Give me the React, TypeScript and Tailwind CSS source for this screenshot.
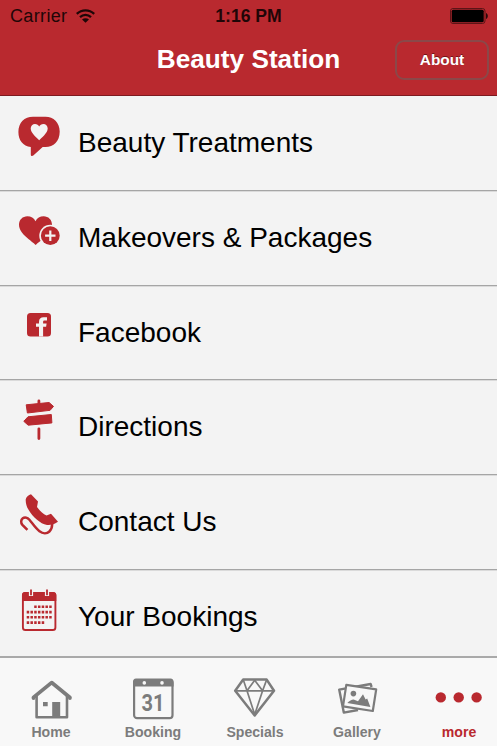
import type { ReactNode } from "react";

const menuItems: { label: string; icon: ReactNode }[] = [
  {
    label: "Beauty Treatments",
    icon: (
      <>
        <path
          fill="currentColor"
          d="M23 10.7H35.5C43.5 10.7 49.7 16.5 49.7 25.5C49.7 35.5 43.5 41 35.5 41H32.7L23.3 49.6C22 50.6 20.8 50 20.8 48.5V41C13 40 8.4 34.5 8.4 26C8.4 16.5 14.5 10.7 23 10.7Z"
        />
        <path
          fill="#f3f3f3"
          d="M29.2 34.3C27 32 20.7 27.2 20.7 22.6C20.7 19.8 22.7 18 25 18C27 18 28.4 19 29.2 20.5C30 19 31.4 18 33.4 18C35.7 18 37.7 19.8 37.7 22.6C37.7 27.2 31.4 32 29.2 34.3Z"
        />
      </>
    ),
  },
  {
    label: "Makeovers & Packages",
    icon: (
      <>
        <path
          fill="currentColor"
          d="M25.7 44C22 40 9 33 9 23.8C9 18.8 12.7 15.3 17.3 15.3C21 15.3 24 17.2 25.5 20.2C27 17.2 30 15.3 33.7 15.3C38.3 15.3 42 18.8 42 23.8C42 33 29.5 40 25.7 44Z"
        />
        <circle cx="40.3" cy="34.7" r="11" fill="#f3f3f3" />
        <circle cx="40.3" cy="34.7" r="9.4" fill="currentColor" />
        <path d="M40.3 29.5V39.9M35.1 34.7H45.5" stroke="#f3f3f3" strokeWidth="2.2" />
      </>
    ),
  },
  {
    label: "Facebook",
    icon: (
      <>
        <rect x="17" y="17" width="24" height="23.4" rx="3.5" fill="currentColor" />
        <path
          fill="#f3f3f3"
          d="M29 40.4V30.8H26V27.6H29V26C29 22.8 30.6 21.3 33.6 21.3H37V24.6H34.8C33.6 24.6 33.1 25 33.1 26.2V27.6H36.6L36.1 30.8H33.1V40.4Z"
        />
      </>
    ),
  },
  {
    label: "Directions",
    icon: (
      <g fill="currentColor" stroke="currentColor" strokeLinejoin="round">
        <path strokeWidth="1" d="M16.2 14.8L39.1 12.5L43.5 16.4L40.1 20.3L17.4 23Z" />
        <path strokeWidth="1" d="M18 26.8L41.3 24.5L41.9 32.9L18.2 35.2L13.8 31.3Z" />
        <path strokeWidth="2.8" strokeLinecap="round" d="M28.9 11V13M28.9 38.8V48.6" />
      </g>
    ),
  },
  {
    label: "Contact Us",
    icon: (
      <>
        <path
          fill="currentColor"
          d="M21 9.3C18.5 10.2 16 12.2 15.7 14.5C15.6 18 16.6 21.6 18.4 24.6C20.5 28.4 23.5 32 27 34.8C30 37.4 33.5 39.6 37 39.9C40 40.2 43.6 39.6 45 38.6L48 36.7L41 28.7L36.5 30.6C33 29 30 26 27 22L28 16.4Z"
        />
        <path
          fill="none"
          stroke="currentColor"
          strokeWidth="2.5"
          d="M17.4 44.9L12.4 39.8C10.6 37.8 10.8 34.8 12.8 33.3C14.9 31.8 17.6 32.7 19.2 34.5C22.2 38 25.6 43.3 29.5 46.3C32.8 48.8 36.9 48.9 39.4 46.5C41.4 44.7 42.1 42.2 42.2 39"
        />
      </>
    ),
  },
  {
    label: "Your Bookings",
    icon: (
      <>
        <rect x="12.9" y="13" width="32.5" height="37" rx="2.6" fill="none" stroke="currentColor" strokeWidth="1.9" />
        <path fill="currentColor" d="M12 21V15C12 13 13 12 15 12H43C45 12 46.3 13 46.3 15V21Z" />
        <path d="M21 9.5V16M37 9.5V16" stroke="#f3f3f3" strokeWidth="4.2" />
        <path d="M21 9.5V15.2M37 9.5V15.2" stroke="currentColor" strokeWidth="1.8" />
        <g stroke="currentColor" strokeWidth="2.6" strokeDasharray="2.5 1.25">
          <path d="M24.2 26.8h17.6" />
          <path d="M16.7 32.1h25.1" />
          <path d="M16.7 37.3h25.1" />
          <path d="M16.7 42.6h17.6" />
        </g>
      </>
    ),
  },
];

const tabs: { label: string; active?: boolean; icon: ReactNode }[] = [
  {
    label: "Home",
    icon: (
      <>
        <path
          fill="none"
          stroke="currentColor"
          strokeWidth="3.8"
          strokeLinejoin="round"
          strokeLinecap="round"
          d="M7.5 26V25.4L25.6 10.6L43.9 25.4V26"
        />
        <path fill="none" stroke="currentColor" strokeWidth="2.6" strokeLinejoin="round" d="M10.6 24V45.2H41V24" />
        <path fill="currentColor" d="M17 30h4.7v4.2h-4.7zM26.2 30H34.2V45H26.2z" />
      </>
    ),
  },
  {
    label: "Booking",
    icon: (
      <>
        <rect x="6.1" y="8" width="38.4" height="38.2" rx="3" fill="none" stroke="currentColor" strokeWidth="2.2" />
        <path fill="currentColor" d="M5 14.6V10C5 7.6 6 6.4 8 6.4H42.5C44.5 6.4 45.6 7.6 45.6 10V14.6Z" />
        <circle cx="16.3" cy="10.9" r="1.8" fill="#f8f8f8" />
        <circle cx="34" cy="10.9" r="1.8" fill="#f8f8f8" />
        <text
          x="25"
          y="38.6"
          textAnchor="middle"
          fontSize="23"
          fontWeight="700"
          textLength="23"
          lengthAdjust="spacingAndGlyphs"
          fill="currentColor"
          className="font-[Roboto]"
        >
          31
        </text>
      </>
    ),
  },
  {
    label: "Specials",
    icon: (
      <g fill="none" stroke="currentColor" strokeLinejoin="round">
        <path strokeWidth="2.5" d="M13.2 7.6H36.7L44 18.8L24.7 43.5L5.2 18.8Z" />
        <path strokeWidth="1.7" d="M5.2 18.8H44M13.2 7.6L17 18.8L24.7 8.2L32.6 18.8L36.7 7.6M17 18.8L24.7 42.5L32.6 18.8" />
      </g>
    ),
  },
  {
    label: "Gallery",
    icon: (
      <>
        <path fill="none" stroke="currentColor" strokeWidth="2.4" strokeLinejoin="round" d="M39.6 15L38.6 12L7.2 17.6L11.8 40.6L26 38" />
        <path fill="#f8f8f8" stroke="currentColor" strokeWidth="2.2" strokeLinejoin="round" d="M14.3 12.8L44.2 17.4L40.8 39L11 34.4Z" />
        <circle cx="21.4" cy="21.6" r="2.8" fill="currentColor" />
        <path fill="currentColor" d="M15.3 31C17.5 29 19.5 27.8 21.6 27.6L26 29.2L31 22.2L33.6 27.4L35.2 26.4L38.4 35Z" />
      </>
    ),
  },
  {
    label: "more",
    active: true,
    icon: (
      <g fill="currentColor">
        <circle cx="6.8" cy="25.4" r="5.2" />
        <circle cx="24.7" cy="25.4" r="5.2" />
        <circle cx="42.6" cy="25.4" r="5.2" />
      </g>
    ),
  },
];

function StatusBar() {
  return (
    <div className="grid h-8 grid-cols-3 items-center px-[9px] text-[18px] text-[#1f0607]">
      <div className="flex items-center gap-[9px] pl-px">
        <span className="tracking-[0.35px]">Carrier</span>
        <svg width="19" height="14" viewBox="0 0 19 14" fill="none" stroke="currentColor" strokeWidth="2.3">
          <path d="M.8 4.9C5.8 .1 13.2 .1 18.2 4.9" />
          <path d="M4 8.2C7.2 5.2 11.8 5.2 15 8.2" />
          <path fill="currentColor" stroke="none" d="M9.5 13.8L6 10.5C8 8.8 11 8.8 13 10.5Z" />
        </svg>
      </div>
      <span className="text-center text-[17.6px] font-bold">1:16 PM</span>
      <svg className="justify-self-end" width="38" height="16" viewBox="0 0 38 16">
        <rect x=".5" y=".5" width="34.5" height="15" rx="2.5" fill="none" stroke="#5c1417" />
        <rect x="1.7" y="1.7" width="32" height="12.6" rx="1.5" fill="#000" />
        <path fill="#28090b" d="M36 5C38.4 6 38.4 10 36 11Z" />
      </svg>
    </div>
  );
}

export default function App() {
  return (
    <div className="flex h-[746px] w-[497px] flex-col overflow-hidden bg-[#f3f3f3] font-['Liberation_Sans',Arial,sans-serif]">
      <header className="h-24 shrink-0 border-b border-[#7d1a20] bg-[#b9292f]">
        <StatusBar />
        <div className="grid grid-cols-[1fr_auto_1fr] items-center px-2 pt-2">
          <span />
          <h1 className="pb-0.5 text-[26.2px] leading-[38px] font-bold text-white">Beauty Station</h1>
          <button
            type="button"
            className="h-10 w-[94px] justify-self-end rounded-[9px] border-2 border-[#8b4849] text-[15.4px] font-bold text-white [text-shadow:0_-1px_0_#701519]"
          >
            About
          </button>
        </div>
      </header>

      <main className="flex-1 overflow-hidden">
        {menuItems.map((item) => (
          <div
            key={item.label}
            className="flex h-[94.8px] border-b border-[#a5a5a5] pl-[10px] shadow-[0_1px_0_#dadada]"
          >
            <svg className="mt-[10px] shrink-0 text-[#b9292f]" width="60" height="60" viewBox="0 0 60 60" aria-hidden>
              {item.icon}
            </svg>
            <span className="pt-[27px] pl-2 text-[28px] leading-10 text-black">{item.label}</span>
          </div>
        ))}
      </main>

      <nav className="flex h-[90px] shrink-0 border-t-2 border-[#a9a9a9] bg-[#f8f8f8]">
        {tabs.map((tab) => (
          <button
            key={tab.label}
            type="button"
            className={`flex w-[102px] shrink-0 flex-col items-center pt-[14px] ${tab.active ? "text-[#b9292f]" : "text-[#7c7c7c]"}`}
          >
            <svg width="50" height="50" viewBox="0 0 50 50" aria-hidden>
              {tab.icon}
            </svg>
            <span className="text-[14.1px] leading-5 font-bold">{tab.label}</span>
          </button>
        ))}
      </nav>
    </div>
  );
}
